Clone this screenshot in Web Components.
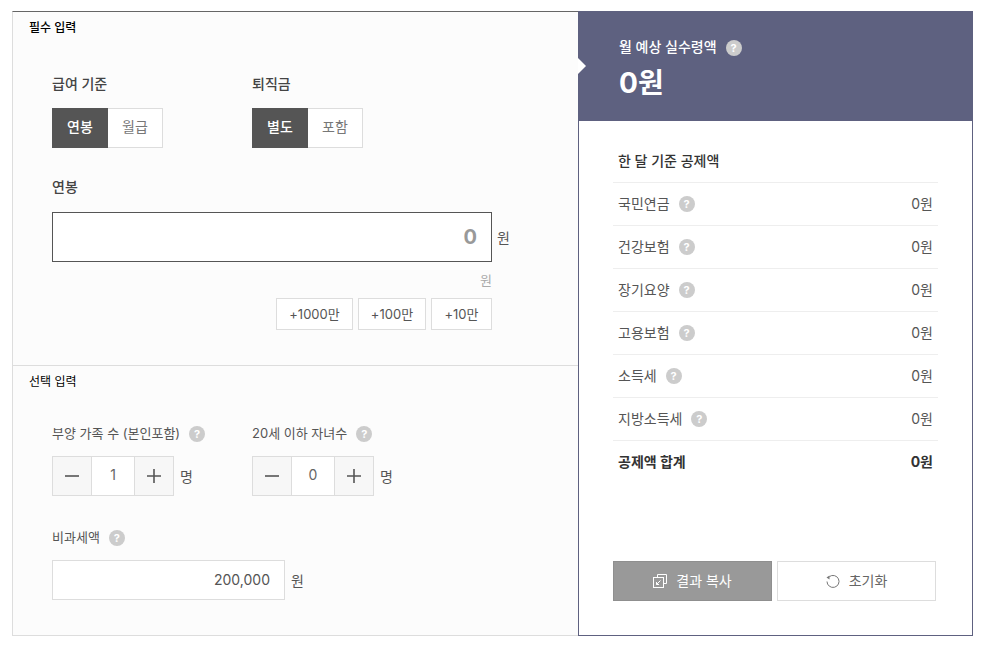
<!DOCTYPE html>
<html lang="ko">
<head>
<meta charset="utf-8">
<title>실수령액 계산기</title>
<style>
  html, body { margin: 0; padding: 0; background: #fff; }
  body { font-family: Inter, "Noto Sans CJK KR", sans-serif; color: #444; }
</style>
</head>
<body>
<salary-calc></salary-calc>

<script>
const FONT = 'Inter, "Noto Sans CJK KR", sans-serif'

class HelpIcon extends HTMLElement {
  constructor () {
    super()
    this.attachShadow({ mode: 'open' }).innerHTML = /* html */`
    <style>
      :host { display: inline-flex; width: 16px; height: 16px; margin-top: 2px; border-radius: 50%; background: #ccc; color: #fff;
        align-items: center; justify-content: center; font: 700 11px/16px ${FONT}; flex: none; }
    </style>
    ?`
  }
}

class ToggleGroup extends HTMLElement {
  constructor () {
    super()
    this.attachShadow({ mode: 'open' })
  }

  connectedCallback () {
    const on = this.getAttribute('on')
    const off = this.getAttribute('off')
    this.shadowRoot.innerHTML = /* html */`
    <style>
      :host { display: flex; height: 40px; font: 400 14px/36px ${FONT}; }
      span { box-sizing: border-box; height: 40px; text-align: center; border: 1px solid #ddd; }
      .on { width: 56px; background: #555; border-color: #555; color: #fff; font-weight: 500; }
      .off { width: 55px; background: #fff; border-left: 0; color: #777; }
    </style>
    <span class="on">${on}</span><span class="off">${off}</span>`
  }
}

class NumStepper extends HTMLElement {
  constructor () {
    super()
    this.attachShadow({ mode: 'open' })
  }

  connectedCallback () {
    this.shadowRoot.innerHTML = /* html */`
    <style>
      :host { display: flex; align-items: center; font: 400 14px ${FONT}; color: #555; }
      .box { display: flex; box-sizing: border-box; width: 122px; height: 40px; border: 1px solid #ddd; }
      .btn { flex: 1; background: #f7f7f7; display: flex; align-items: center; justify-content: center; }
      .val { width: 44px; box-sizing: border-box; background: #fff; border: 1px solid #ddd; border-width: 0 1px;
        text-align: center; line-height: 36px; font-size: 14px; color: #666; }
      .unit { margin-left: 6px; }
      svg { display: block; }
    </style>
    <div class="box">
      <span class="btn"><svg width="16" height="16" viewBox="0 0 16 16"><path d="M1 8h14" stroke="#555" stroke-width="1.6"/></svg></span>
      <span class="val">${this.getAttribute('value')}</span>
      <span class="btn"><svg width="16" height="16" viewBox="0 0 16 16"><path d="M1 8h14M8 1v14" stroke="#555" stroke-width="1.6"/></svg></span>
    </div>
    <span class="unit">명</span>`
  }
}

class FormPanel extends HTMLElement {
  constructor () {
    super()
    this.attachShadow({ mode: 'open' }).innerHTML = /* html */`
    <style>
      :host { display: flex; flex-direction: column; box-sizing: border-box; width: 566px; height: 625px;
        background: #fcfcfc; border: 1px solid #ddd; border-top-color: #666; border-right: 0; color: #444; }
      * { box-sizing: border-box; }
      .required { height: 354px; border-bottom: 1px solid #ddd; padding: 7px 0 0 16px; }
      .title { font-size: 12px; line-height: 18px; color: #000; font-weight: 500; }
      .optional .title { font-weight: 400; }
      .cols { display: flex; margin: 37px 0 0 23px; }
      .cols > div { width: 200px; }
      .label { font-size: 14px; font-weight: 500; line-height: 20px; color: #444; }
      .cols toggle-group { margin-top: 14px; }
      .salary { margin: 29px 0 0 23px; }
      .row { display: flex; align-items: center; margin-top: 15px; }
      .big { width: 440px; height: 50px; border: 1px solid #555; background: #fff; text-align: right;
        padding-right: 14px; font-size: 20px; font-weight: 700; line-height: 48px; color: #999; }
      .unit { font-size: 14px; margin-left: 5px; color: #555; }
      .hint { width: 440px; text-align: right; font-size: 13px; line-height: 18px; color: #aaa; margin-top: 9px; }
      .adds { display: flex; width: 440px; justify-content: flex-end; gap: 5px; margin-top: 9px; }
      .adds span { height: 32px; border: 1px solid #ddd; background: #fff; font-size: 13px; line-height: 30px;
        text-align: center; color: #555; }
      .optional { padding: 7px 0 0 16px; }
      .grid { display: flex; margin: 32px 0 0 23px; }
      .grid > div { width: 200px; }
      .sub { display: flex; align-items: center; gap: 9px; font-size: 13px; line-height: 20px; color: #555; }
      .sub span { white-space: nowrap; }
      num-stepper { margin-top: 13px; }
      .tax { margin: 31px 0 0 23px; }
      .small { width: 233px; height: 40px; border: 1px solid #ddd; background: #fff; text-align: right;
        padding-right: 14px; font-size: 14px; line-height: 38px; color: #555; }
      .tax .row { margin-top: 13px; }
      .tax .unit { margin-left: 6px; }
    </style>
    <section class="required">
      <div class="title">필수 입력</div>
      <div class="cols">
        <div><div class="label">급여 기준</div><toggle-group on="연봉" off="월급"></toggle-group></div>
        <div><div class="label">퇴직금</div><toggle-group on="별도" off="포함"></toggle-group></div>
      </div>
      <div class="salary">
        <div class="label">연봉</div>
        <div class="row"><div class="big">0</div><span class="unit">원</span></div>
        <div class="hint">원</div>
        <div class="adds">
          <span style="width:77px">+1000만</span><span style="width:68px">+100만</span><span style="width:61px">+10만</span>
        </div>
      </div>
    </section>
    <section class="optional">
      <div class="title">선택 입력</div>
      <div class="grid">
        <div><div class="sub"><span>부양 가족 수 (본인포함)</span><help-icon></help-icon></div><num-stepper value="1"></num-stepper></div>
        <div><div class="sub"><span>20세 이하 자녀수</span><help-icon></help-icon></div><num-stepper value="0"></num-stepper></div>
      </div>
      <div class="tax">
        <div class="sub"><span>비과세액</span><help-icon></help-icon></div>
        <div class="row"><div class="small">200,000</div><span class="unit">원</span></div>
      </div>
    </section>`
  }
}

class ResultPanel extends HTMLElement {
  constructor () {
    super()
    const rows = ['국민연금', '건강보험', '장기요양', '고용보험', '소득세', '지방소득세']
    this.attachShadow({ mode: 'open' }).innerHTML = /* html */`
    <style>
      :host { display: flex; flex-direction: column; box-sizing: border-box; width: 395px; height: 625px;
        background: #fff; border: 1px solid #5e6180; border-top: 0; position: relative; }
      * { box-sizing: border-box; }
      header { height: 110px; margin: 0 -1px; background: #5e6180; color: #fff; padding: 26px 0 0 41px; position: relative; }
      header::before { content: ""; position: absolute; left: 0; top: 47px; border: 8px solid transparent;
        border-left-color: #fff; border-right-width: 0; }
      .cap { display: flex; align-items: center; gap: 9px; font-size: 14px; font-weight: 500; line-height: 20px; }
      .total { font-size: 28px; font-weight: 700; line-height: 38px; margin-top: 7px; }
      .body { padding: 29px 34px 0; flex: 1; }
      h3 { margin: 0; padding: 0 5px; height: 32px; font-size: 14px; font-weight: 500; line-height: 22px; color: #333; }
      .line { display: flex; align-items: center; justify-content: space-between; height: 43px; padding: 0 5px 2px;
        border-top: 1px solid #eee; font-size: 14px; color: #555; }
      .line > div { display: flex; align-items: center; gap: 9px; }
      .line.sum { font-weight: 700; color: #333; }
      .btns { display: flex; gap: 5px; padding: 0 0 34px 34px; }
      .btns div { display: flex; align-items: center; justify-content: center; gap: 9px; width: 159px; height: 40px;
        font-size: 14px; border: 1px solid #ddd; color: #666; }
      .btns span { margin-bottom: 3px; }
      .btns .copy { background: #999; border-color: #8f8f8f; color: #fff; }
      svg { display: block; }
    </style>
    <header>
      <div class="cap"><span>월 예상 실수령액</span><help-icon></help-icon></div>
      <div class="total">0원</div>
    </header>
    <div class="body">
      <h3>한 달 기준 공제액</h3>
      ${rows.map(r => `<div class="line"><div><span>${r}</span><help-icon></help-icon></div><span>0원</span></div>`).join('')}
      <div class="line sum"><span>공제액 합계</span><span>0원</span></div>
    </div>
    <div class="btns">
      <div class="copy"><svg width="14" height="14" viewBox="0 0 14 14" fill="none" stroke="#fff"><path d="M4.5 3V.5h9v9H11"/><rect x=".5" y="3.5" width="10" height="10"/><path d="M3.5 10.5l4-4M3.5 8v2.500h2.500"/></svg><span>결과 복사</span></div>
      <div><svg width="14" height="14" viewBox="0 0 14 14" fill="none" stroke="#777"><path d="M3.300 2.700A6 6 0 1 1 1 7.500"/><path d="M.5 3.500l3 2V1.500z" fill="#777" stroke="none"/></svg><span>초기화</span></div>
    </div>`
  }
}

class SalaryCalc extends HTMLElement {
  constructor () {
    super()
    this.attachShadow({ mode: 'open' }).innerHTML = /* html */`
    <style>
      :host { display: flex; padding: 11px 0 0 12px; font-family: ${FONT}; }
    </style>
    <form-panel></form-panel><result-panel></result-panel>`
  }
}

customElements.define('help-icon', HelpIcon)
customElements.define('toggle-group', ToggleGroup)
customElements.define('num-stepper', NumStepper)
customElements.define('form-panel', FormPanel)
customElements.define('result-panel', ResultPanel)
customElements.define('salary-calc', SalaryCalc)
</script>
</body>
</html>
